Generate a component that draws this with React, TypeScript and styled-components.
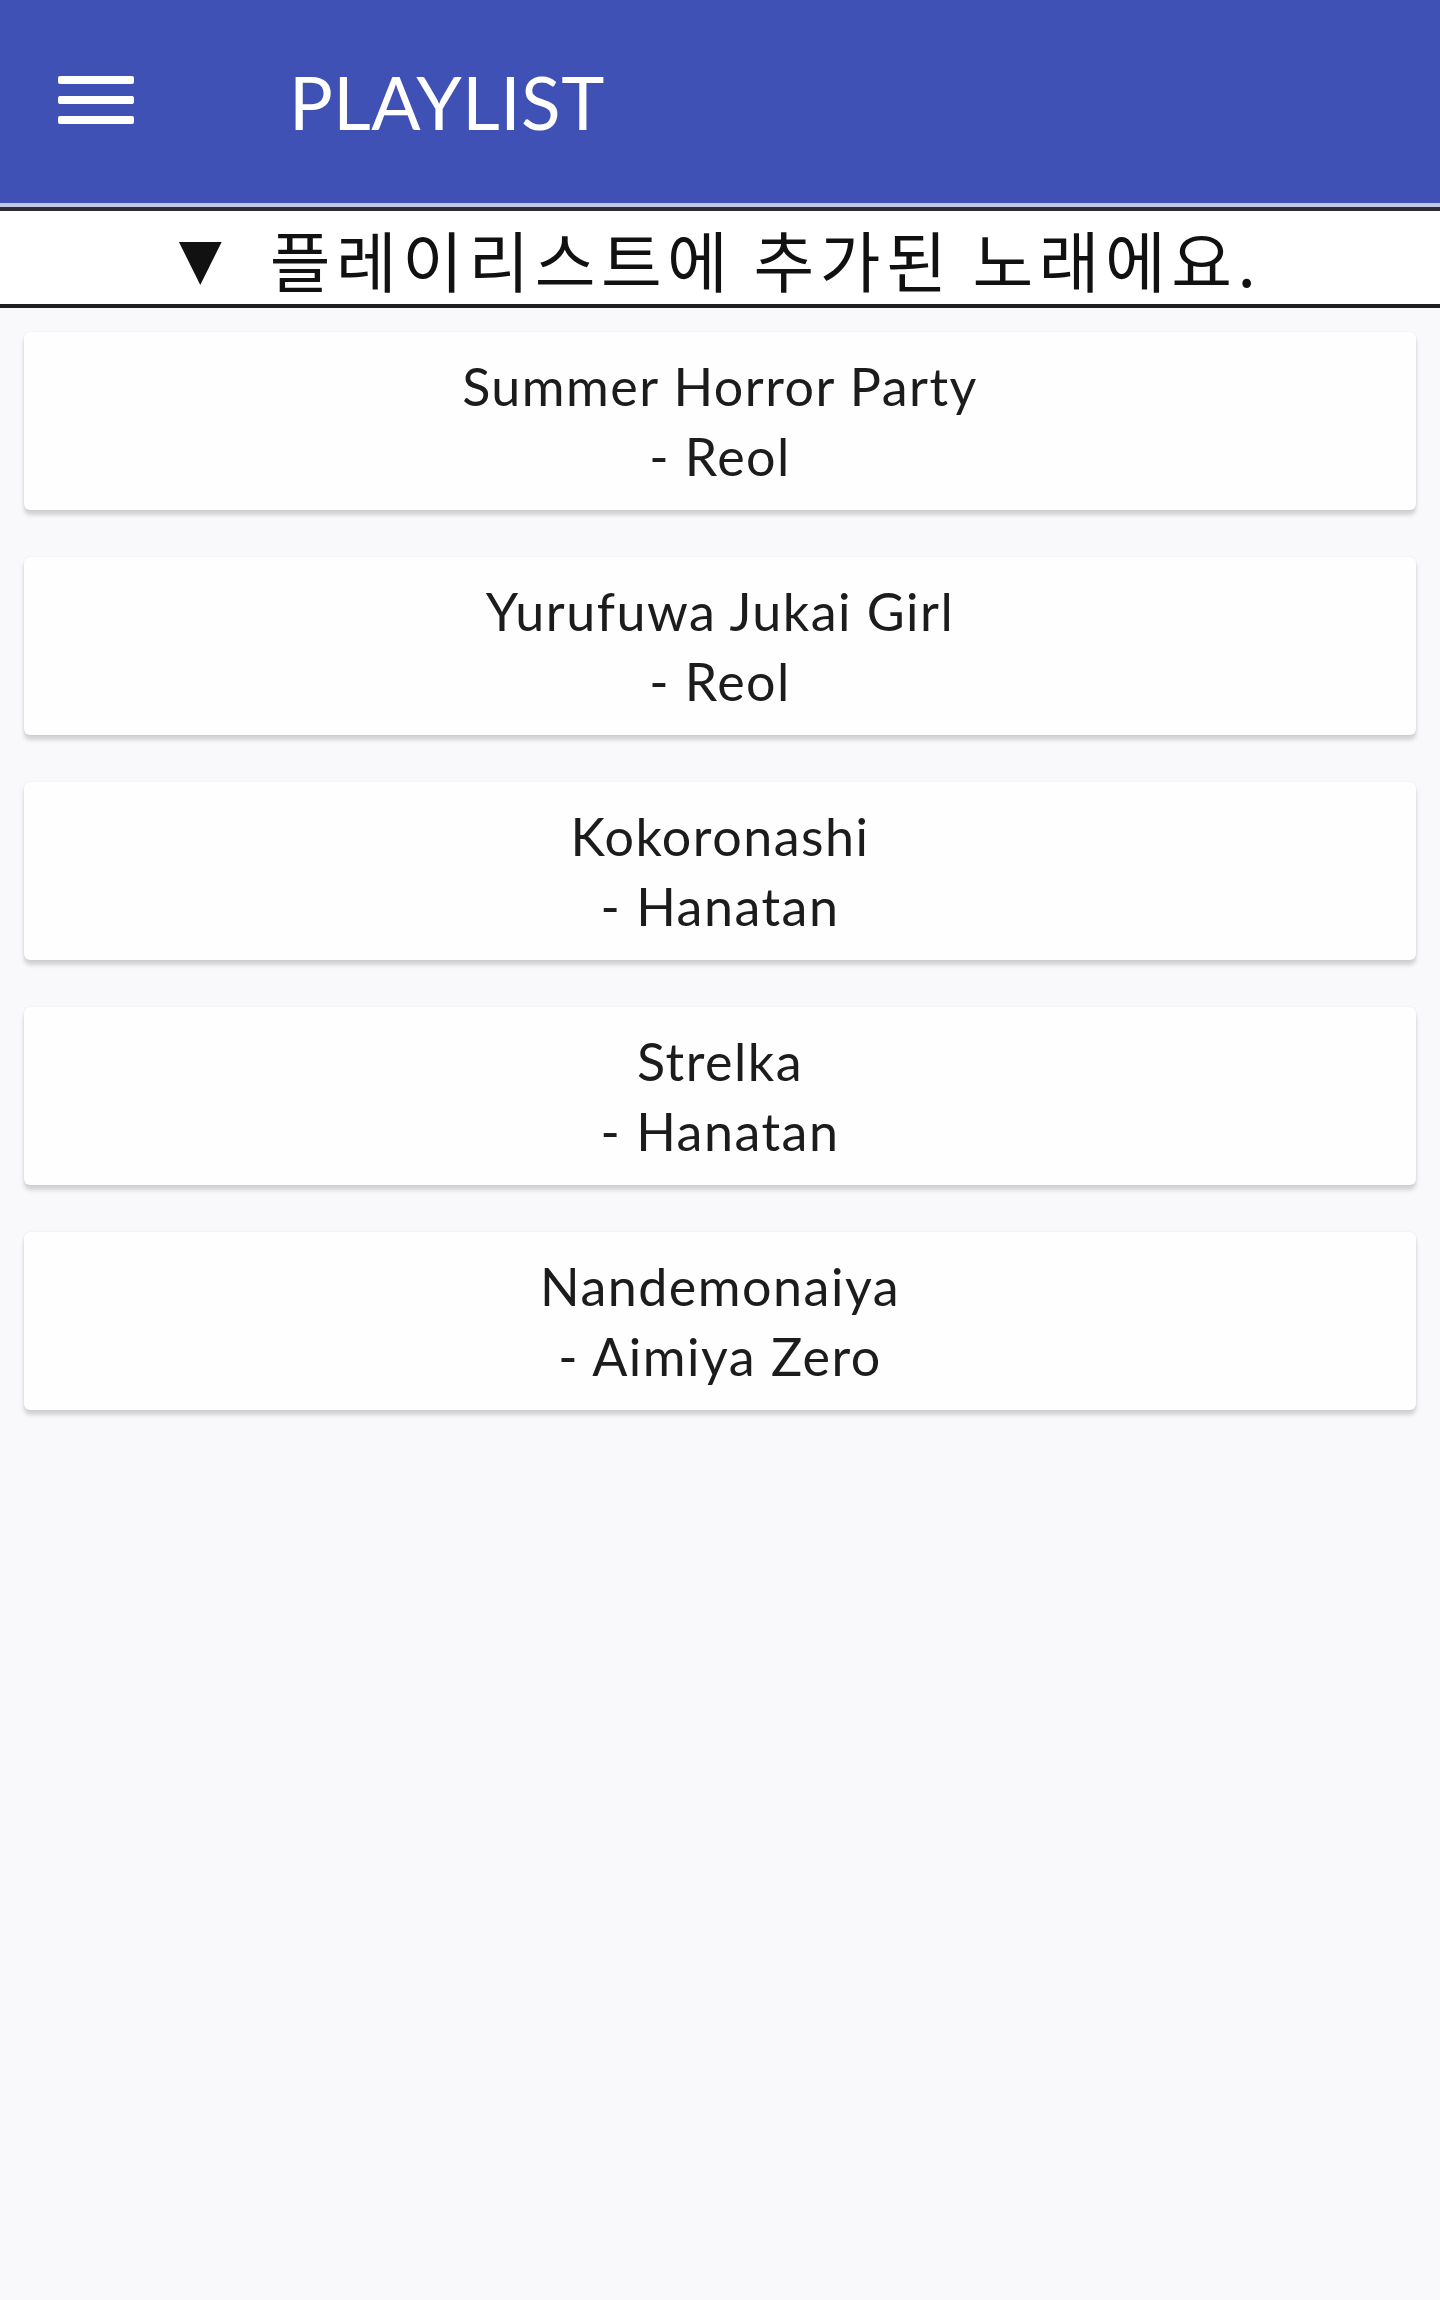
import React from "react";
import styled, { createGlobalStyle } from "styled-components";

const GlobalStyle = createGlobalStyle`
  html, body {
    margin: 0;
    padding: 0;
    background: #f9f8fb;
  }
  body {
    font-family: "Lato", "Noto Sans", sans-serif;
  }
  #root {
    min-height: 2300px;
    background: #f9f8fb;
  }
`;

const Page = styled.div`
  display: flex;
  flex-direction: column;
  min-height: 2300px;
  background: #f9f8fb;
`;

const AppBar = styled.header`
  height: 203px;
  background: #3f51b5;
  border-bottom: 4px solid #c3cae6;
  display: flex;
  align-items: center;
  padding-left: 58px;
  gap: 155px;
  box-sizing: content-box;
`;

const MenuButton = styled.button`
  width: 76px;
  height: 48px;
  padding: 0;
  border: none;
  background: transparent;
  display: flex;
  flex-direction: column;
  justify-content: space-between;
  margin-top: -4px;
  cursor: pointer;
`;

const MenuBar = styled.span`
  display: block;
  height: 8px;
  width: 100%;
  border-radius: 2px;
  background: #ffffff;
`;

const Title = styled.h1`
  margin: 0;
  margin-top: 2px;
  font-family: "Lato", "Noto Sans", sans-serif;
  font-weight: 400;
  font-size: 73px;
  letter-spacing: 0.5px;
  color: #ffffff;
  line-height: 1;
`;

const Notice = styled.div`
  height: 93px;
  background: #ffffff;
  border-top: 4px solid #2e2e36;
  border-bottom: 4px solid #1e1e1e;
  display: flex;
  align-items: center;
  justify-content: center;
  gap: 48px;
  font-family: "Noto Sans CJK KR", "Noto Sans", sans-serif;
  color: #111111;
`;

const Arrow = styled.span`
  font-size: 56px;
  line-height: 1;
  margin-top: 2px;
  font-family: "DejaVu Sans", sans-serif;
`;

const NoticeText = styled.span`
  font-size: 66px;
  font-weight: 400;
  line-height: 1;
  letter-spacing: 5.5px;
  margin-top: 0;
`;

const SongList = styled.ul`
  list-style: none;
  margin: 0;
  padding: 24px 24px 0;
  display: flex;
  flex-direction: column;
  gap: 47px;
`;

const SongCard = styled.li`
  height: 178px;
  box-sizing: border-box;
  background: #fefefe;
  border-radius: 6px;
  box-shadow: 0 5px 4px rgba(0, 0, 0, 0.16), 0 0 2px rgba(0, 0, 0, 0.08);
  display: flex;
  flex-direction: column;
  align-items: center;
  justify-content: center;
  font-family: "Lato", "Noto Sans", sans-serif;
  font-size: 52px;
  letter-spacing: 1.5px;
  line-height: 70px;
  color: #1c1c1c;
`;

const SongLine = styled.span`
  display: block;
  white-space: nowrap;
`;

const songs = [
  { title: "Summer Horror Party", artist: "Reol" },
  { title: "Yurufuwa Jukai Girl", artist: "Reol" },
  { title: "Kokoronashi", artist: "Hanatan" },
  { title: "Strelka", artist: "Hanatan" },
  { title: "Nandemonaiya", artist: "Aimiya Zero" },
];

export default function App() {
  return (
    <>
      <GlobalStyle />
      <Page>
        <AppBar>
          <MenuButton aria-label="menu">
            <MenuBar />
            <MenuBar />
            <MenuBar />
          </MenuButton>
          <Title>PLAYLIST</Title>
        </AppBar>
        <Notice>
          <Arrow>▼</Arrow>
          <NoticeText>플레이리스트에 추가된 노래에요.</NoticeText>
        </Notice>
        <SongList>
          {songs.map((s) => (
            <SongCard key={s.title}>
              <SongLine>{s.title}</SongLine>
              <SongLine>- {s.artist}</SongLine>
            </SongCard>
          ))}
        </SongList>
      </Page>
    </>
  );
}
